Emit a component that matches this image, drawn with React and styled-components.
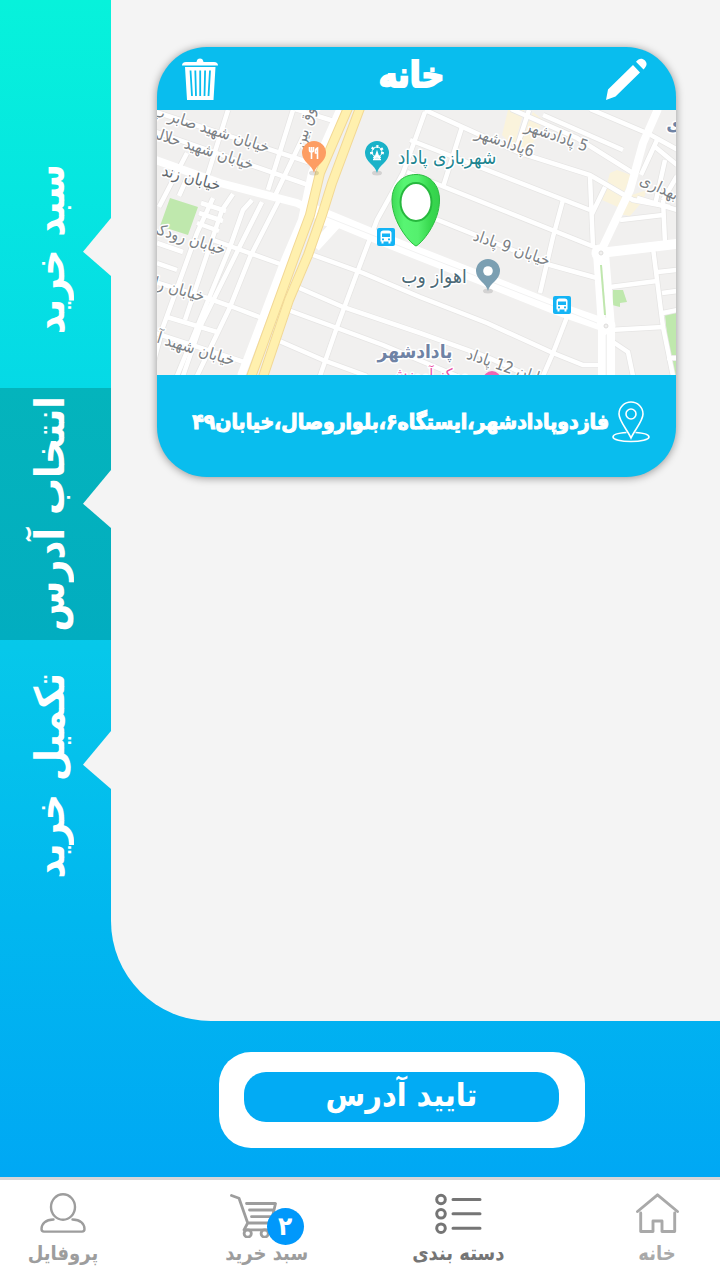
import React from "react";
import styled, { createGlobalStyle } from "styled-components";

const GlobalStyle = createGlobalStyle`
  *, *::before, *::after { box-sizing: border-box; }
  body {
    margin: 0;
    background: #f4f4f4;
    font-family: "DejaVu Sans Condensed", "DejaVu Sans", sans-serif;
  }
  button { font-family: inherit; cursor: pointer; }
`;

const Page = styled.div`
  display: flex;
  flex-direction: column;
  min-height: 100vh;
`;

const Shell = styled.div`
  flex: 1;
  display: flex;
  flex-direction: column;
  background: linear-gradient(180deg, #07f2db 0%, #05d9e6 33%, #06c8ea 55%, #01b7ef 78%, #00a8f4 100%);
`;

const Columns = styled.div`
  flex: 1;
  display: flex;
`;

const Main = styled.main`
  flex: 1;
  min-width: 0;
  padding: 47px 44px 44px 46px;
  background: #f4f4f4;
  border-bottom-left-radius: 100px;
`;

const Steps = styled.nav`
  flex: none;
  width: 111px;
  padding-top: 110px;
  display: flex;
  flex-direction: column;
`;

const Step = styled.button`
  position: relative;
  display: flex;
  align-items: center;
  justify-content: center;
  height: ${(p) => p.$height}px;
  padding: 0 12px 0 0;
  border: 0;
  background: ${(p) => (p.$active ? "linear-gradient(180deg, #04b4bc, #02adc0)" : "transparent")};
  color: #fff;

  &::after {
    content: "";
    position: absolute;
    right: 0;
    top: ${(p) => p.$notch}px;
    width: 28px;
    height: 58px;
    background: #f4f4f4;
    clip-path: polygon(100% 0, 0 58%, 100% 100%);
  }
`;

const StepLabel = styled.span`
  writing-mode: vertical-rl;
  transform: rotate(180deg);
  white-space: nowrap;
  font-size: 41px;
  line-height: 56px;
  font-weight: 700;
`;

const Card = styled.article`
  overflow: hidden;
  border-radius: 50px;
  background: #09bdee;
  color: #fff;
  box-shadow: 0 1px 8px rgba(0, 0, 0, 0.4);
`;

const CardHeader = styled.header`
  display: flex;
  align-items: center;
  justify-content: space-between;
  height: 63px;
  padding: 0 29px 0 25px;
`;

const CardTitle = styled.h2`
  margin: 0;
  padding-bottom: 8px;
  font-size: 35px;
  line-height: 48px;
  font-weight: 700;
  -webkit-text-stroke: 2px #fff;
`;

const IconButton = styled.button`
  display: flex;
  padding: 0;
  border: 0;
  background: none;
  color: inherit;
`;

const MapView = styled.svg`
  display: block;
  width: 100%;
  height: 265px;
  background: #f1f0ef;
`;

const MapLabel = styled.text`
  direction: rtl;
  text-anchor: middle;
  font-size: ${(p) => p.$size || 16}px;
  font-weight: ${(p) => (p.$bold ? 700 : 400)};
  fill: ${(p) => p.$color || "#7b8084"};
  stroke: #fff;
  stroke-width: 3px;
  stroke-linejoin: round;
  paint-order: stroke;
`;

const CardFooter = styled.footer`
  display: flex;
  align-items: center;
  gap: 3px;
  min-height: 102px;
  padding: 0 26px 8px;
`;

const Address = styled.p`
  margin: 0;
  font-size: 21px;
  line-height: 32px;
  font-weight: 700;
  white-space: nowrap;
  -webkit-text-stroke: 1px #fff;
`;

const ConfirmBar = styled.div`
  display: flex;
  justify-content: center;
  padding: 31px 0 29px 84px;
`;

const ConfirmFrame = styled.div`
  display: flex;
  width: 366px;
  padding: 20px 26px 26px 25px;
  border-radius: 32px;
  background: #fff;
`;

const ConfirmButton = styled.button`
  flex: 1;
  height: 50px;
  padding: 0 0 4px;
  border: 0;
  border-radius: 22px;
  background: #02abf4;
  color: #fff;
  font-size: 32px;
  line-height: 46px;
  font-weight: 700;
`;

const TabBar = styled.nav`
  display: grid;
  grid-template-columns: 90px 109fr 90px 102fr 90px 114fr 90px;
  height: 103px;
  padding: 13px 18px 0;
  border-top: 3px solid #d6d6d8;
  background: #fff;
`;

const Tab = styled.a`
  grid-column: ${(p) => p.$column};
  display: flex;
  flex-direction: column;
  align-items: center;
  gap: 2px;
  color: ${(p) => p.$tone};
  font-size: 20px;
  line-height: 28px;
  font-weight: 700;
  white-space: nowrap;
  text-decoration: none;
`;

const TabIcon = styled.span`
  position: relative;
  display: flex;
  height: 44px;
  padding-right: ${(p) => (p.$badged ? 27 : 0)}px;
`;

const Badge = styled.span`
  position: absolute;
  top: 15px;
  right: 0;
  width: 37px;
  height: 37px;
  border-radius: 50%;
  background: #0098fb;
  color: #fff;
  font-size: 26px;
  line-height: 36px;
  text-align: center;
`;

const TrashIcon = () => (
  <svg width="36" height="42" viewBox="0 0 36 42" aria-hidden="true">
    <path
      fill="currentColor"
      d="M14.500 4C15 1.500 16 .5 18 .5S21 1.500 21.500 4H32Q36 4 36 7.500H0Q0 4 4 4ZM3 9H33.500L31.500 42H5Z"
    />
    <path
      stroke="#09bdee"
      strokeWidth="1.800"
      d="M8.500 12.500 10 38M13.300 12.500 14 38M18.200 12.500V38M23.100 12.500 22.500 38M28 12.500 26.500 38"
    />
  </svg>
);

const PencilIcon = () => (
  <svg width="42" height="42" viewBox="0 0 42 42" aria-hidden="true">
    <path
      fill="currentColor"
      d="M28 7 35 14.500 10.500 38.500 1 42 3 31.500ZM31 3.800C34 0 37 0 40 2.500 42.500 5.500 42 8 38.500 11.500Z"
    />
  </svg>
);

const PlaceIcon = () => (
  <svg width="38" height="42" viewBox="0 0 38 42" fill="none" stroke="currentColor" strokeWidth="1.600" aria-hidden="true">
    <path d="M19 37C15.500 29 7 20 7 13a12 12 0 0 1 24 0C31 20 22.500 29 19 37Z" />
    <circle cx="19" cy="13" r="5" />
    <path d="M14.500 31.500C6 32 1 33.500 1 36 1 38.500 9 40.500 19 40.500S37 38.500 37 36C37 33.500 31 32 23.500 31.500" />
  </svg>
);

const ProfileIcon = () => (
  <svg width="46" height="41" viewBox="0 0 46 41" fill="none" stroke="currentColor" strokeWidth="2.400" strokeLinecap="round" aria-hidden="true">
    <ellipse cx="23" cy="14" rx="12" ry="12.800" />
    <path d="M13.500 26.500C5.500 26.500 1.500 31 1.500 36Q1.500 38.600 4 38.600H42Q44.500 38.600 44.500 36C44.500 31 40.500 26.500 32.500 26.500" />
  </svg>
);

const CartIcon = () => (
  <svg width="47" height="45" viewBox="0 0 47 45" fill="none" stroke="currentColor" strokeWidth="2.800" strokeLinecap="round" strokeLinejoin="round" aria-hidden="true">
    <path d="M1.500 2.500 9 5.200 17.700 30H41L45.500 10.500H16.500M19.500 17H44M21.500 23.700H42M17.700 30 14 36.800H40" />
    <circle cx="17.700" cy="40.500" r="3.600" />
    <circle cx="34.700" cy="40.500" r="3.600" />
  </svg>
);

const ListIcon = () => (
  <svg width="47" height="41" viewBox="0 0 47 41" fill="none" stroke="currentColor" strokeWidth="3" strokeLinecap="round" aria-hidden="true">
    <circle cx="6" cy="6.500" r="4.300" />
    <circle cx="6" cy="20.800" r="4.300" />
    <circle cx="6" cy="35.200" r="4.300" />
    <path d="M18 6.500H45M18 20.800H45M18 35.200H45" />
  </svg>
);

const HomeIcon = () => (
  <svg width="43" height="41" viewBox="0 0 43 41" fill="none" stroke="currentColor" strokeWidth="2.900" strokeLinecap="round" strokeLinejoin="round" aria-hidden="true">
    <path d="M1.500 18.500 21.500 1.800 41.500 18.500M4.700 20V38.500H17V28H26V38.500H38.700V20" />
  </svg>
);

const Pin = ({ x, y, color, children }) => (
  <g transform={`translate(${x} ${y})`}>
    <ellipse cx="0" cy="20" rx="5" ry="2.500" fill="#000" opacity=".12" />
    <path fill={color} d="M0 20C-1.500 12-12 9-12 0a12 12 0 0 1 24 0C12 9 1.500 12 0 20Z" />
    {children}
  </g>
);

const BusStop = ({ x, y }) => (
  <g transform={`translate(${x} ${y})`}>
    <rect width="18" height="18" rx="2" fill="#14b4f5" />
    <path fill="#fff" d="M3.500 5Q3.500 2.500 6.500 2.500H11.500Q14.500 2.500 14.500 5V13.500H13.500V15.500H11.500V13.500H6.500V15.500H4.500V13.500H3.500Z" />
    <path fill="#14b4f5" d="M5 5.500H13V9H5ZM5 10.500H7V12.200H5ZM11 10.500H13V12.200H11Z" />
  </g>
);

const minorRoads = [
  "M268 0 363 43 433 65 476 90 513 97",
  "M253 30 433 100",
  "M250 62 340 98 440 138",
  "M276 108 393 155 440 168",
  "M354-1 420 28 476 63",
  "M386 5 466 40",
  "M433-1 492 24 530 45",
  "M268 2 246 63 220 110 200 163 180 217 163 266",
  "M305 17 286 77M372 0 360 37",
  "M433 67 436 137M448 77 435 104M406 90 396 127 383 183",
  "M410 207 396 243 386 266",
  "M156 145 206 163 263 187 330 213 396 243 426 255H446",
  "M140 177 186 197 263 223 330 247 372 266",
  "M131 200 180 218 226 235 300 266",
  "M120 230 166 250 210 266",
  "M-7 0 160 55M-7 20 157 77",
  "M138-1 180 12M71 0 50 67M136 0 111 80M146 27 116 90",
  "M30 43 2 97M30 68 22 86M0 133 26 142M0 153 20 160",
  "M56 88 40 123 6 217-6 262",
  "M76 84 65 100 28 210M95 90 86 100 73 137 36 227 20 266",
  "M105 92 81 140 43 217 26 266M122 90 93 147 73 197 40 266",
  "M44 93 69 101M42 103 66 111M40 113 62 121M56 130 126 155",
  "M-2 172 50 188 76 197 105 208M10 207 60 222M-2 223 90 253",
  "M463 110 506 105M506 90 508 133M453 177 500 171M453 220 506 217",
  "M496 138 506 217 516 266M501 162 520 160M505 183 520 181M506 203 520 200",
  "M453 230 471 242 476 266M510 248H520",
  "M500 30 484 65M497 36 520 55M508 50 498 95M520 66 506 90M480 88 520 100",
];

const AreaMap = () => (
  <MapView viewBox="0 0 519 265" preserveAspectRatio="xMidYMid slice" role="img" aria-label="نقشه پادادشهر">
    <rect width="519" height="265" fill="#f1f0ef" />
    <g fill="#faf3dc">
      <path d="M351 0H367L357 37 345 25ZM376 2 386 10 373 40 360 35ZM453 63 460 60 474 65 461 97 445 90ZM475 85 490 80 485 92 473 106 462 104Z" />
    </g>
    <g fill="#bfe8ad">
      <path d="M13 88 41 97 31 125 3 116ZM456 180H466L470 192 463 193V197L455 195ZM508 205 519 203V265H514ZM443 150 448 205 444 205Z" />
    </g>
    <g fill="none" stroke="#e6e5e4" strokeWidth="6">
      {minorRoads.map((d) => <path key={d} d={d} />)}
    </g>
    <g fill="none" stroke="#fff" strokeWidth="4.500">
      {minorRoads.map((d) => <path key={d} d={d} />)}
    </g>
    <g fill="none" stroke="#fff" strokeLinejoin="round">
      <path strokeWidth="8" d="M-7 48 63 73 140 93 165 105M501-1 486 33 473 80 443 143M183 0 155 63 145 110 128 150 84 266" />
      <path strokeWidth="13" d="M150 98 220 127 260 143 336 173 396 197 453 217" />
      <path strokeWidth="10" d="M443 143 528 133M165 110 180 113 158 137" />
      <path strokeWidth="8" d="M440 143 445 217V266M448 143 454 217V266" />
      <path strokeWidth="17" strokeLinecap="round" d="M443 143V143.100M450 216V216.100" />
    </g>
    <path stroke="#c0e7ae" strokeWidth="2" fill="none" d="M444 155 448 205" />
    <path stroke="#f2f2f2" strokeWidth="1" fill="none" d="M170 107 260 143 440 213M449 225V265" />
    <g fill="none" stroke="#f2d895" strokeWidth="10">
      <path d="M191-2 163 63 153 105 140 140 94 267" />
      <path d="M203-2 175 73 165 105 151 145 132 190 106 267" />
    </g>
    <g fill="none" stroke="#fff0ae" strokeWidth="8">
      <path d="M191-2 163 63 153 105 140 140 94 267" />
      <path d="M203-2 175 73 165 105 151 145 132 190 106 267" />
    </g>
    <g fill="#f1f0ef" stroke="#dedddc">
      <circle cx="444" cy="143" r="2" />
      <circle cx="449" cy="216" r="2" />
    </g>

    <MapLabel transform="translate(52 24) rotate(18)">خیابان شهید صابر پ</MapLabel>
    <MapLabel transform="translate(42 43) rotate(18)">خیابان شهید حلالی</MapLabel>
    <MapLabel transform="translate(33 73) rotate(15)" $color="#60666c">خیابان زند</MapLabel>
    <MapLabel transform="translate(155 10) rotate(-75)">فاروق بین</MapLabel>
    <MapLabel transform="translate(28 133) rotate(17)">خیابان رودکی</MapLabel>
    <MapLabel transform="translate(12 182) rotate(16)">خیابان رازی</MapLabel>
    <MapLabel transform="translate(34 243) rotate(17)">خیابان شهید آر</MapLabel>
    <MapLabel transform="translate(346 37) rotate(19)">6پادادشهر</MapLabel>
    <MapLabel transform="translate(398 31) rotate(19)">5 پادادشهر</MapLabel>
    <MapLabel transform="translate(500 82) rotate(25)">بهداری</MapLabel>
    <MapLabel transform="translate(517 20)" $size={19} $bold $color="#6f83a5">ی</MapLabel>
    <MapLabel transform="translate(353 143) rotate(19)">خیابان 9 پاداد</MapLabel>
    <MapLabel transform="translate(351 263) rotate(19)">خیابان 12 پاداد</MapLabel>
    <MapLabel x="290" y="54" $size={19} $color="#1d8590">شهربازی پاداد</MapLabel>
    <MapLabel x="277" y="173" $size={19} $color="#4b6976">اهواز وب</MapLabel>
    <MapLabel x="258" y="248" $size={19} $bold $color="#6f83a5">پادادشهر</MapLabel>
    <MapLabel x="272" y="270" $size={16} $color="#ea4fa6">مرکز آموزش</MapLabel>
    <circle cx="335" cy="270" r="9" fill="#ee64b2" />

    <Pin x="157" y="43" color="#fd9d62">
      <path fill="none" stroke="#fff" strokeWidth="1.600" d="M-4.500-6V-3Q-4.500-1-2.500-1T-.5-3V-6M-2.500-6V6M3.500 6V-5Q1-4 1.500 0H3.500" />
    </Pin>
    <Pin x="220" y="43" color="#1ab2c8">
      <circle r="5" cy="-1" fill="none" stroke="#fff" strokeWidth="1" />
      <circle r="5.500" cy="-1" fill="none" stroke="#fff" strokeWidth="3" strokeDasharray="2 2.930" />
      <path fill="none" stroke="#fff" strokeWidth="1.500" d="M-2.500 6.500 0-1 2.500 6.500M-4 6.500H4M0-1V6" />
    </Pin>
    <Pin x="331" y="161" color="#7b9fb2">
      <circle r="4.800" fill="#fff" />
    </Pin>
    <BusStop x={220} y={118} />
    <BusStop x={396} y={186} />

    <defs>
      <linearGradient id="marker" x1="0" y1="0" x2="1" y2="0">
        <stop offset="0" stopColor="#3fdc57" />
        <stop offset=".25" stopColor="#58f573" />
        <stop offset=".55" stopColor="#55f06e" />
        <stop offset=".8" stopColor="#38d94f" />
        <stop offset="1" stopColor="#35d04c" />
      </linearGradient>
    </defs>
    <path
      fill="url(#marker)"
      stroke="#2bbd40"
      strokeWidth="1"
      d="M259 136C254 134 235 113 235 90 235 74 246 64.500 259 64.500S282.500 74 282.500 90C282.500 113 264 134 259 136Z"
    />
    <ellipse cx="259" cy="92" rx="15.500" ry="19" fill="#fff" stroke="#27b83e" strokeWidth="2" />
  </MapView>
);

export default function App() {
  return (
    <Page dir="rtl" lang="fa">
      <GlobalStyle />
      <Shell>
        <Columns>
          <Main>
            <Card>
              <CardHeader>
                <IconButton aria-label="ویرایش"><PencilIcon /></IconButton>
                <CardTitle>خانه</CardTitle>
                <IconButton aria-label="حذف"><TrashIcon /></IconButton>
              </CardHeader>
              <AreaMap />
              <CardFooter>
                <PlaceIcon />
                <Address>فازدوپادادشهر،ایستگاه۶،بلواروصال،خیابان۴۹</Address>
              </CardFooter>
            </Card>
          </Main>
          <Steps>
            <Step $height={278} $notch={108}><StepLabel>سبد خرید</StepLabel></Step>
            <Step $height={252} $notch={82} $active aria-current="step"><StepLabel>انتخاب آدرس</StepLabel></Step>
            <Step $height={272} $notch={91}><StepLabel>تکمیل خرید</StepLabel></Step>
          </Steps>
        </Columns>
        <ConfirmBar dir="ltr">
          <ConfirmFrame>
            <ConfirmButton dir="rtl">تایید آدرس</ConfirmButton>
          </ConfirmFrame>
        </ConfirmBar>
      </Shell>
      <TabBar>
        <Tab href="#home" $column={1} $tone="#a9a9a9"><TabIcon><HomeIcon /></TabIcon>خانه</Tab>
        <Tab href="#categories" $column={3} $tone="#757575" aria-current="page"><TabIcon><ListIcon /></TabIcon>دسته بندی</Tab>
        <Tab href="#cart" $column={5} $tone="#9d9d9d"><TabIcon $badged><CartIcon /><Badge>۲</Badge></TabIcon>سبد خرید</Tab>
        <Tab href="#profile" $column={7} $tone="#9d9d9d"><TabIcon><ProfileIcon /></TabIcon>پروفایل</Tab>
      </TabBar>
    </Page>
  );
}
